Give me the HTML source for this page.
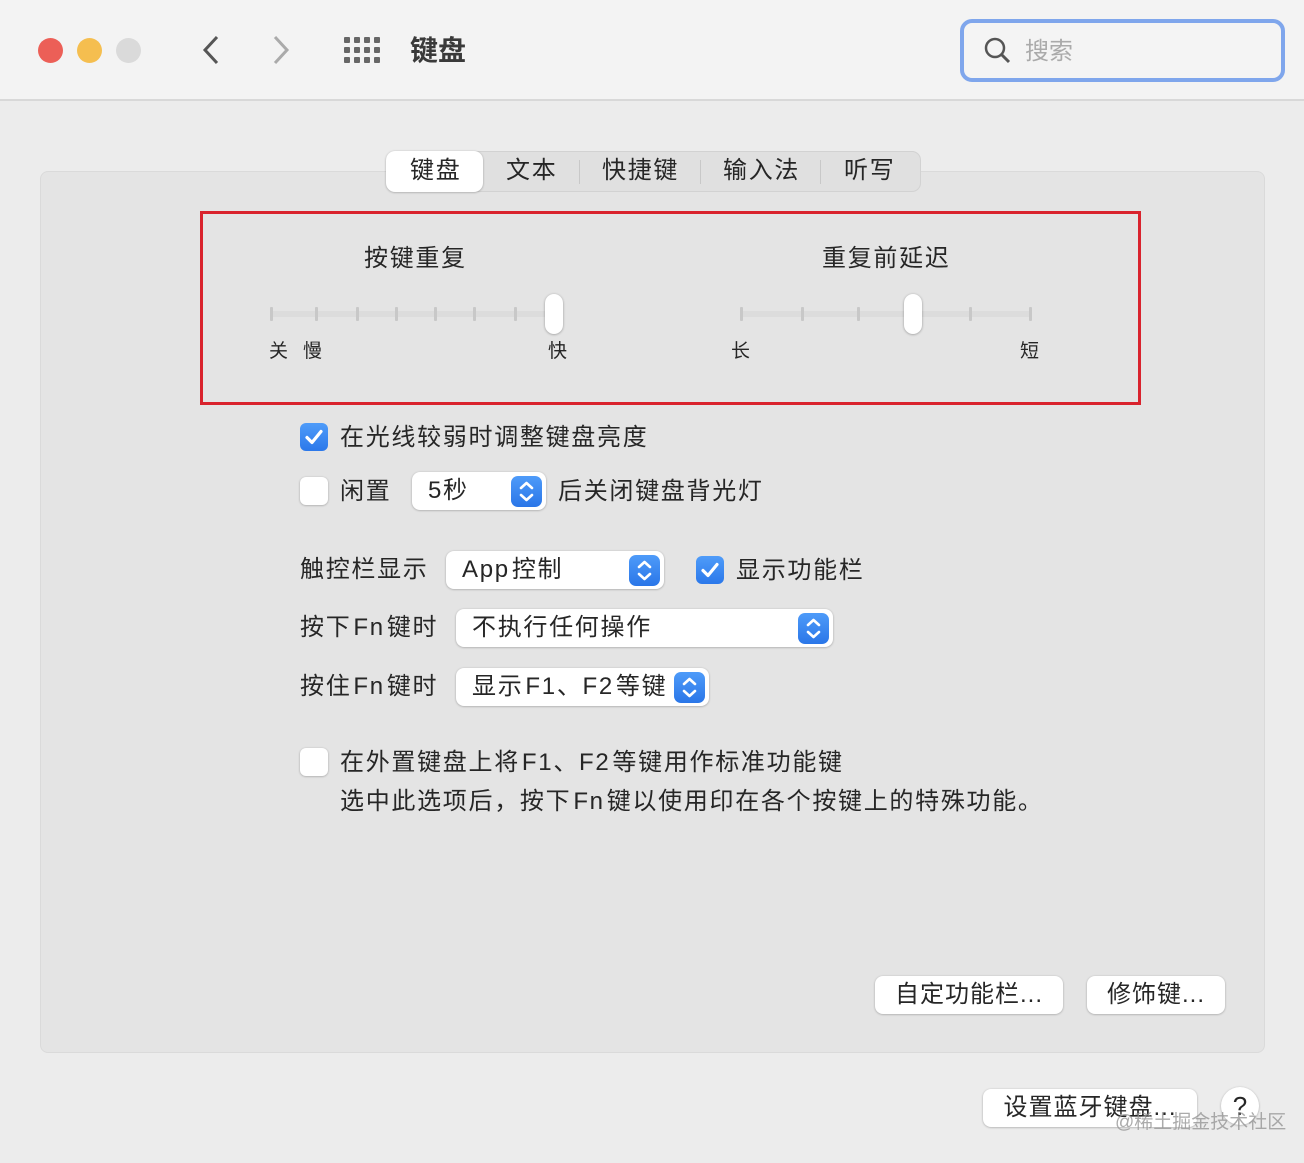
<!DOCTYPE html><html><head><meta charset="utf-8"><style>
*{box-sizing:border-box;margin:0;padding:0}
body{width:1304px;height:1163px;background:#ececec;font-family:"Liberation Sans","Noto Sans CJK SC",sans-serif;color:#262626;position:relative;overflow:hidden}
.a{position:absolute}
.t{position:absolute;font-size:24px;line-height:30px;white-space:nowrap}
.ls{letter-spacing:1.7px}
.pop{position:absolute;height:38px;background:#fff;border-radius:8px;box-shadow:0 0.5px 2px rgba(0,0,0,.3);font-size:24px;line-height:38px;padding-left:16px;white-space:nowrap;letter-spacing:1.7px}
.st{position:absolute;top:4px;right:4px;width:31px;height:31px;border-radius:7px;background:linear-gradient(#4e9bf9,#2a76e8)}
.cb{position:absolute;width:28px;height:28px;border-radius:6px;background:#fff;box-shadow:0 0.5px 2px rgba(0,0,0,.3)}
.cb.on{background:linear-gradient(#4f9cf9,#2b78ea);box-shadow:none}
.btn{position:absolute;height:38px;background:#fff;border-radius:8px;box-shadow:0 0.5px 2px rgba(0,0,0,.3);font-size:24px;line-height:38px;text-align:center;white-space:nowrap;letter-spacing:1px}
.tick{position:absolute;width:3px;height:14px;background:#c8c8c8;border-radius:1px}
.track{position:absolute;height:6px;background:#dcdcdc;border-radius:3px}
.thumb{position:absolute;width:18px;height:40px;background:#fff;border-radius:9px;box-shadow:0 0.5px 2.5px rgba(0,0,0,.35)}
.s{margin-left:2px}
</style></head><body>
<div class="a" style="left:0;top:0;width:1304px;height:101px;background:#f3f3f3;border-bottom:2px solid #d8d8d8"></div>
<div class="a" style="left:38px;top:38px;width:25px;height:25px;border-radius:50%;background:#ec5f57"></div>
<div class="a" style="left:77px;top:38px;width:25px;height:25px;border-radius:50%;background:#f5be4f"></div>
<div class="a" style="left:116px;top:38px;width:25px;height:25px;border-radius:50%;background:#dadada"></div>
<svg class="a" style="left:195px;top:33px" width="110" height="34"><path d="M22 4 L10 17 L22 30" stroke="#555" stroke-width="3" fill="none"/><path d="M80 4 L92 17 L80 30" stroke="#aaa" stroke-width="3" fill="none"/></svg>
<svg class="a" style="left:344px;top:37px" width="38" height="28"><g fill="#666"><rect x="0" y="0" width="6" height="6" rx="1"/><rect x="10" y="0" width="6" height="6" rx="1"/><rect x="20" y="0" width="6" height="6" rx="1"/><rect x="30" y="0" width="6" height="6" rx="1"/><rect x="0" y="10" width="6" height="6" rx="1"/><rect x="10" y="10" width="6" height="6" rx="1"/><rect x="20" y="10" width="6" height="6" rx="1"/><rect x="30" y="10" width="6" height="6" rx="1"/><rect x="0" y="20" width="6" height="6" rx="1"/><rect x="10" y="20" width="6" height="6" rx="1"/><rect x="20" y="20" width="6" height="6" rx="1"/><rect x="30" y="20" width="6" height="6" rx="1"/></g></svg>
<div class="t" style="left:410px;top:34px;font-size:28px;line-height:34px;font-weight:bold;color:#3a3a3a">键盘</div>
<div class="a" style="left:960px;top:19px;width:325px;height:63px;border:4px solid #7fa6ec;border-radius:12px;background:#f4f4f4"></div>
<svg class="a" style="left:983px;top:36px" width="30" height="30"><circle cx="12" cy="12" r="9" stroke="#555" stroke-width="2.5" fill="none"/><path d="M18.5 18.5 L26 26" stroke="#555" stroke-width="3"/></svg>
<div class="t" style="left:1025px;top:37px;color:#aaa">搜索</div>

<div class="a" style="left:40px;top:171px;width:1225px;height:882px;background:#e4e4e4;border-radius:8px;border:1px solid #dadada"></div>
<div class="a" style="left:386px;top:151px;width:535px;height:41px;background:#e0e0e0;border-radius:9px;border:1px solid #d2d2d2"></div>
<div class="a" style="left:386px;top:151px;width:97px;height:41px;background:#fff;border-radius:9px;box-shadow:0 0.5px 2px rgba(0,0,0,.3)"></div>
<div class="a" style="left:579px;top:160px;width:1px;height:24px;background:#c8c8c8"></div>
<div class="a" style="left:700px;top:160px;width:1px;height:24px;background:#c8c8c8"></div>
<div class="a" style="left:820px;top:160px;width:1px;height:24px;background:#c8c8c8"></div>
<div class="t ls" style="left:410px;top:156px">键盘</div>
<div class="t ls" style="left:506px;top:156px">文本</div>
<div class="t ls" style="left:602px;top:156px">快捷键</div>
<div class="t ls" style="left:723px;top:156px">输入法</div>
<div class="t ls" style="left:844px;top:156px">听写</div>

<div class="a" style="left:200px;top:211px;width:941px;height:194px;border:3px solid #d9232d"></div>
<div class="t ls" style="left:364px;top:244px">按键重复</div>
<div class="t ls" style="left:822px;top:244px">重复前延迟</div>
<div class="track" style="left:270px;top:311px;width:290px"></div>
<div class="tick" style="left:270px;top:307px"></div><div class="tick" style="left:315px;top:307px"></div><div class="tick" style="left:356px;top:307px"></div><div class="tick" style="left:395px;top:307px"></div><div class="tick" style="left:434px;top:307px"></div><div class="tick" style="left:473px;top:307px"></div><div class="tick" style="left:514px;top:307px"></div>
<div class="thumb" style="left:545px;top:294px"></div>
<div class="track" style="left:740px;top:311px;width:292px"></div>
<div class="tick" style="left:740px;top:307px"></div><div class="tick" style="left:801px;top:307px"></div><div class="tick" style="left:857px;top:307px"></div><div class="tick" style="left:969px;top:307px"></div><div class="tick" style="left:1029px;top:307px"></div>
<div class="thumb" style="left:904px;top:294px"></div>
<div class="t" style="left:269px;top:337px;font-size:19px">关</div>
<div class="t" style="left:303px;top:337px;font-size:19px">慢</div>
<div class="t" style="left:548px;top:337px;font-size:19px">快</div>
<div class="t" style="left:731px;top:337px;font-size:19px">长</div>
<div class="t" style="left:1020px;top:337px;font-size:19px">短</div>

<svg width="0" height="0" style="position:absolute"><defs><symbol id="ck" viewBox="0 0 28 28"><path d="M7 14.5 L12 19.5 L21 8.5" stroke="#fff" stroke-width="3.2" fill="none" stroke-linecap="round" stroke-linejoin="round"/></symbol><symbol id="ar" viewBox="0 0 31 31"><path d="M10 12 L15.5 7 L21 12 M10 19 L15.5 24 L21 19" stroke="#fff" stroke-width="2.6" fill="none" stroke-linecap="round" stroke-linejoin="round"/></symbol></defs></svg>
<div class="cb on" style="left:300px;top:423px"><svg width="28" height="28"><use href="#ck"/></svg></div>
<div class="t ls" style="left:340px;top:423px">在光线较弱时调整键盘亮度</div>
<div class="cb" style="left:300px;top:477px"></div>
<div class="t ls" style="left:340px;top:477px">闲置</div>
<div class="pop" style="left:412px;top:472px;width:134px">5秒<div class="st"><svg width="31" height="31"><use href="#ar"/></svg></div></div>
<div class="t ls" style="left:558px;top:477px">后关闭键盘背光灯</div>

<div class="t ls" style="left:300px;top:555px">触控栏显示</div>
<div class="pop" style="left:446px;top:551px;width:218px">App<span class="s">控制</span><div class="st"><svg width="31" height="31"><use href="#ar"/></svg></div></div>
<div class="cb on" style="left:696px;top:556px"><svg width="28" height="28"><use href="#ck"/></svg></div>
<div class="t ls" style="left:736px;top:556px">显示功能栏</div>
<div class="t ls" style="left:300px;top:613px">按下<span class="s">Fn</span><span class="s">键时</span></div>
<div class="pop" style="left:456px;top:609px;width:377px">不执行任何操作<div class="st"><svg width="31" height="31"><use href="#ar"/></svg></div></div>
<div class="t ls" style="left:300px;top:672px">按住<span class="s">Fn</span><span class="s">键时</span></div>
<div class="pop" style="left:456px;top:668px;width:253px">显示<span class="s">F1、F2</span><span class="s">等键</span><div class="st"><svg width="31" height="31"><use href="#ar"/></svg></div></div>

<div class="cb" style="left:300px;top:748px"></div>
<div class="t ls" style="left:340px;top:748px">在外置键盘上将<span class="s">F1、F2</span><span class="s">等键用作标准功能键</span></div>
<div class="t ls" style="left:340px;top:787px">选中此选项后，按下<span class="s">Fn</span><span class="s">键以使用印在各个按键上的特殊功能。</span></div>

<div class="btn" style="left:875px;top:976px;width:188px">自定功能栏...</div>
<div class="btn" style="left:1087px;top:976px;width:138px">修饰键...</div>
<div class="btn" style="left:983px;top:1089px;width:214px">设置蓝牙键盘...</div>
<div class="btn" style="left:1221px;top:1087px;width:38px;border-radius:50%;font-size:26px;letter-spacing:0">?</div>
<div class="t" style="left:1115px;top:1111px;font-size:19px;line-height:24px;color:rgba(150,150,150,.8)">@稀土掘金技术社区</div>
</body></html>
